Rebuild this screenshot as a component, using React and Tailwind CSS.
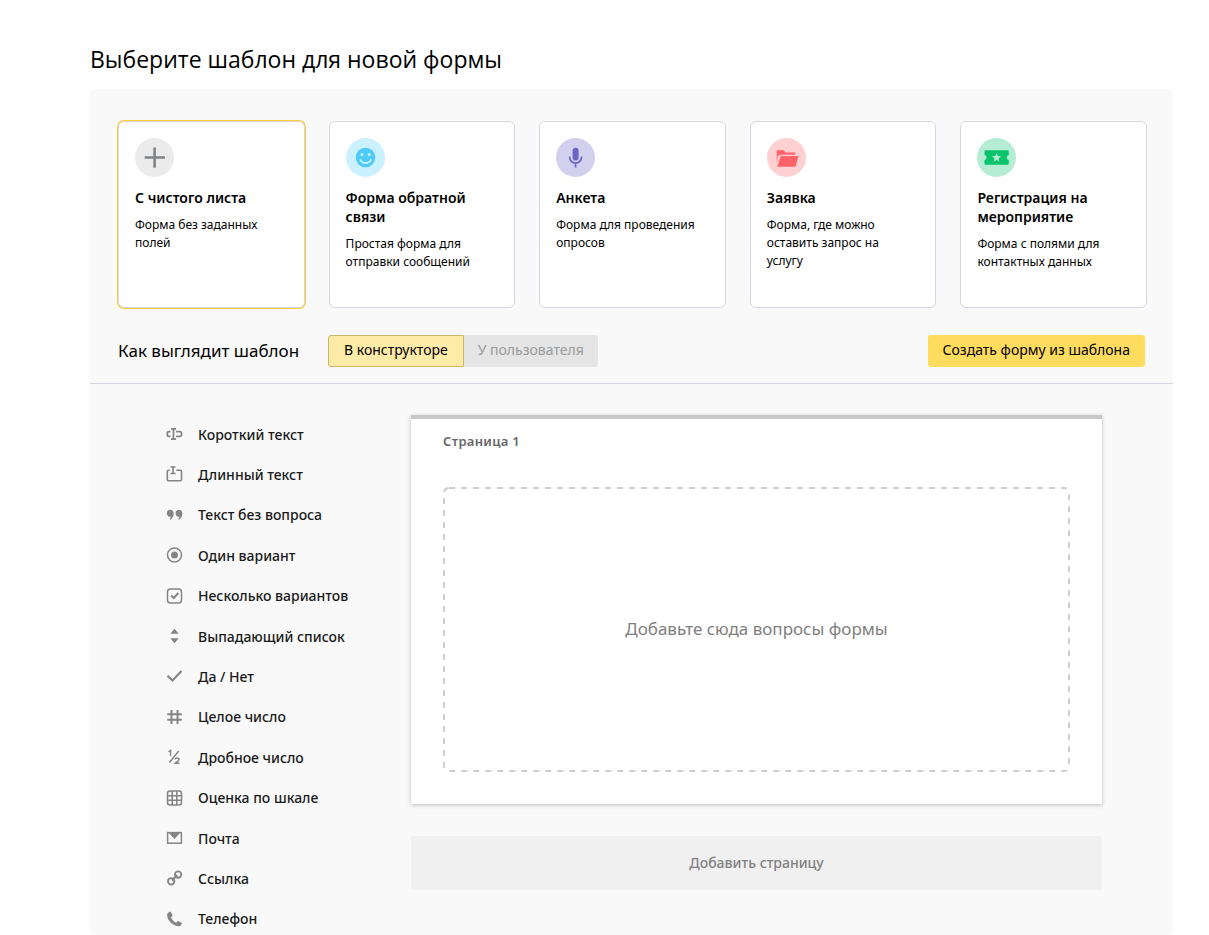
import React, { useState } from 'react';

const templates = [
  { id: 'blank', title: 'С чистого листа', text: 'Форма без заданных полей', circle: 'bg-[#ebebeb]', icon: PlusIcon },
  { id: 'feedback', title: 'Форма обратной связи', text: 'Простая форма для отправки сообщений', circle: 'bg-[#caf1fd]', icon: SmileIcon },
  { id: 'survey', title: 'Анкета', text: 'Форма для проведения опросов', circle: 'bg-[#d2d0ee]', icon: MicIcon },
  { id: 'request', title: 'Заявка', text: 'Форма, где можно оставить запрос на услугу', circle: 'bg-[#ffd0d2]', icon: FolderIcon },
  { id: 'event', title: 'Регистрация на мероприятие', text: 'Форма с полями для контактных данных', circle: 'bg-[#b4edd3]', icon: TicketIcon },
];

function PlusIcon() {
  return (
    <svg width="39" height="39" viewBox="0 0 39 39" fill="#7f8486">
      <path d="M18.3 9.5h2.6v8.7h9v2.6h-9v9h-2.6v-9h-8.6v-2.6h8.6z" />
    </svg>
  );
}

function SmileIcon() {
  return (
    <svg width="39" height="39" viewBox="0 0 39 39" fill="none">
      <circle cx="19.5" cy="19.5" r="9.8" fill="#4ecbf7" />
      <circle cx="16" cy="16.4" r="1.5" fill="#caf1fd" />
      <circle cx="23.2" cy="16.4" r="1.5" fill="#caf1fd" />
      <path d="M14.2 21.2c.7 2.2 2.8 3.8 5.4 3.8s4.7-1.6 5.4-3.8" stroke="#caf1fd" strokeWidth="1.8" />
    </svg>
  );
}

function MicIcon() {
  return (
    <svg width="39" height="39" viewBox="0 0 39 39" fill="none">
      <rect x="16.6" y="9.7" width="6" height="12.8" rx="3" fill="#6a65c3" />
      <path d="M13.7 18.5v.8a5.900 5.900 0 0 0 11.8 0v-.8M19.6 25v4.5" stroke="#6a65c3" strokeWidth="1.7" />
    </svg>
  );
}

function FolderIcon() {
  return (
    <svg width="39" height="39" viewBox="0 0 39 39" fill="#ff6369">
      <path d="M9.700 12.300h7l2 2.200h9.600v2.300H13.300l-2.500 1.200-1.100 8z" />
      <path d="M13.600 18h17.800l-2.800 10.800H10.300z" />
    </svg>
  );
}

function TicketIcon() {
  return (
    <svg width="39" height="39" viewBox="0 0 39 39">
      <path d="M8.500 12.300h22a1.300 1.300 0 0 1 1.300 1.300v3.400a2.600 2.600 0 0 0 0 5.100v3.400a1.300 1.300 0 0 1-1.300 1.300h-22a1 1 0 0 1-1-1v-3.700a2.600 2.600 0 0 0 0-5.100v-3.700a1 1 0 0 1 1-1z" fill="#08c36c" />
      <path d="M19.600 14.800l1.300 3.200 3.300.2-2.600 2.200.9 3.400-2.900-1.900-2.900 1.900.9-3.400-2.600-2.200 3.300-.2z" fill="#b4edd3" />
    </svg>
  );
}

const questionTypes = [
  {
    label: 'Короткий текст',
    icon: (
      <g fill="none" stroke="currentColor" strokeWidth="1.8">
        <path d="M5 2.800h5M5 13.200h5M7.500 2.800v10.400" />
        <path d="M4.500 5.700H2.900a1.600 1.600 0 0 0-1.600 1.600v1.400a1.600 1.600 0 0 0 1.600 1.600h1.600M10 5.700h4a1.500 1.500 0 0 1 1.500 1.500v1.600a1.500 1.500 0 0 1-1.500 1.500h-4" />
      </g>
    ),
  },
  {
    label: 'Длинный текст',
    icon: (
      <g fill="none" stroke="currentColor" strokeWidth="1.6">
        <path d="M4.500 1h5M4.500 7.500h5M7 1v6.500" />
        <path d="M3.700 4.300H2.500a1.200 1.200 0 0 0-1.200 1.200v8a1.200 1.200 0 0 0 1.200 1.200h11.800a1.200 1.200 0 0 0 1.200-1.200v-8a1.200 1.200 0 0 0-1.200-1.200h-4" />
      </g>
    ),
  },
  {
    label: 'Текст без вопроса',
    icon: (
      <g fill="currentColor">
        <path d="M4 2.800a3.500 3.500 0 0 1 3.700 3.700c0 3-1.300 5-3.600 6.200l-.6-.6c.8-.7 1.200-1.400 1.300-2.300A3.500 3.500 0 1 1 4 2.800z" />
        <path d="M12.700 2.800a3.500 3.500 0 0 1 3.700 3.700c0 3-1.300 5-3.600 6.200l-.6-.6c.8-.7 1.200-1.400 1.300-2.300a3.500 3.500 0 1 1-.8-7z" />
      </g>
    ),
  },
  {
    label: 'Один вариант',
    icon: (
      <g>
        <circle cx="8.500" cy="8" r="7" fill="none" stroke="currentColor" strokeWidth="1.5" />
        <circle cx="8.500" cy="8" r="3.500" fill="currentColor" />
      </g>
    ),
  },
  {
    label: 'Несколько вариантов',
    icon: (
      <g fill="none" stroke="currentColor" strokeWidth="1.5">
        <rect x="1.500" y="1" width="14" height="14" rx="3" />
        <path d="M5.200 7.500l2.600 2.500 4.500-5" strokeWidth="2" />
      </g>
    ),
  },
  {
    label: 'Выпадающий список',
    icon: <path d="M8.500.7l4.200 5H4.300zM8.500 15.300l4.200-5H4.300z" fill="currentColor" />,
  },
  {
    label: 'Да / Нет',
    icon: <path d="M1.500 7.800l5 4.700L15.500 3" fill="none" stroke="currentColor" strokeWidth="2.2" />,
  },
  {
    label: 'Целое число',
    icon: <path d="M5.500 1v14M11.500 1v14M1.300 5.200h14.500M1.300 10.800h14.500" fill="none" stroke="currentColor" strokeWidth="2" />,
  },
  {
    label: 'Дробное число',
    icon: (
      <g fill="none" stroke="currentColor" strokeWidth="1.5">
        <path d="M2.500 2.700l2-1.200V7M12.700 2L3.500 13.500" />
        <path d="M9.200 10.500c0-2.200 3.800-2.100 3.800 0 0 1.400-2.300 2.200-3.800 3.700h4.300" />
      </g>
    ),
  },
  {
    label: 'Оценка по шкале',
    icon: (
      <g fill="none" stroke="currentColor" strokeWidth="1.6">
        <rect x="1.500" y="1" width="14" height="14" rx="2.500" />
        <path d="M6.200 1v14M10.800 1v14M1.500 5.700h14M1.500 10.300h14" />
      </g>
    ),
  },
  {
    label: 'Почта',
    icon: (
      <g>
        <rect x="1.600" y="2.600" width="13.800" height="10.600" fill="none" stroke="currentColor" strokeWidth="1.5" />
        <path d="M2.500 2.500h12L8.500 9z" fill="currentColor" />
      </g>
    ),
  },
  {
    label: 'Ссылка',
    icon: (
      <g fill="none" stroke="currentColor" strokeWidth="1.900">
        <circle cx="5.200" cy="11.300" r="3.200" />
        <circle cx="12.100" cy="4.600" r="3.200" />
        <path d="M6 10.500l5.300-5.200" />
      </g>
    ),
  },
  {
    label: 'Телефон',
    icon: (
      <path
        d="M3.700.8L1.800 2C.5 4 1.100 7.500 4.400 11.200c3.400 3.600 7.200 4.600 9.900 3.800l1.500-2.300c.2-.4.1-.8-.3-1l-3.200-1.600c-.4-.2-.8-.1-1 .2l-1 1.400C8.200 10.900 5.800 8.500 4.900 6.200l1.400-1c.4-.3.5-.7.3-1.100L4.800 1.100c-.2-.4-.7-.5-1.100-.3z"
        fill="currentColor"
      />
    ),
  },
];

function TemplateCard({ template, selected, onSelect }) {
  const Icon = template.icon;
  return (
    <button
      type="button"
      aria-pressed={selected}
      onClick={onSelect}
      className={
        'flex min-h-[187px] flex-col items-start rounded-md border border-[#d5d5e3] bg-white py-4 pr-5 pl-4 text-left ' +
        (selected ? 'ring-1 ring-[#ffcc33]' : '')
      }
    >
      <span className={'rounded-full ' + template.circle}>
        <Icon />
      </span>
      <span className="mt-[11px] text-[14px] leading-[19px] font-semibold">{template.title}</span>
      <span className="mt-[9px] text-[12px] leading-[18px]">{template.text}</span>
    </button>
  );
}

function DropZone({ children }) {
  return (
    <div className="relative mt-9 flex min-h-[285px] items-center justify-center pb-0.5 text-[17px] text-[#808080]">
      {/* CSS dashes are too short here, so the outline is drawn */}
      <svg className="absolute inset-0 h-full w-full overflow-visible" fill="none" aria-hidden="true">
        <rect
          x="1"
          y="1"
          rx="5"
          className="h-[calc(100%-2px)] w-[calc(100%-2px)]"
          stroke="#cecece"
          strokeWidth="2"
          strokeDasharray="6 6"
        />
      </svg>
      {children}
    </div>
  );
}

export default function App() {
  const [selected, setSelected] = useState('blank');

  return (
    <main className="bg-white pt-11 pr-9 pl-[90px] font-['Noto_Sans',sans-serif] text-black">
      <h1 className="font-['Open_Sans','Noto_Sans',sans-serif] text-[23px] leading-[30px]">Выберите шаблон для новой формы</h1>

      <div className="mt-[15px] rounded-md bg-[#f9f9f9]">
        <div className="grid grid-cols-5 gap-6 pt-8 pr-[26px] pl-7">
          {templates.map((t) => (
            <TemplateCard key={t.id} template={t} selected={selected === t.id} onSelect={() => setSelected(t.id)} />
          ))}
        </div>

        <div className="flex items-center border-b border-[#d5d5e3] pt-[27px] pr-7 pb-4 pl-7">
          <h2 className="w-[210px] text-[17px] leading-6">Как выглядит шаблон</h2>
          <div className="flex text-[14px]">
            <button type="button" className="h-8 rounded-l-[3px] border border-[#ccb66e] bg-[#ffeba8] px-[15px] pb-1">
              В конструкторе
            </button>
            <button type="button" className="h-8 rounded-r-[3px] bg-[#e5e5e5] px-3.5 pb-1 text-[#999]">
              У пользователя
            </button>
          </div>
          <button type="button" className="ml-auto h-8 rounded-[3px] bg-[#ffdb5e] px-[15px] pb-1 text-[14px]">
            Создать форму из шаблона
          </button>
        </div>

        <div className="flex pr-[71px] pl-[76px]">
          <ul className="flex min-h-[551px] w-[245px] flex-col justify-between pt-10 pb-1.5">
            {questionTypes.map((q) => (
              <li key={q.label} className="flex h-5 items-center gap-[15px] text-[14px] font-medium text-[#1a1a1a]">
                <svg width="17" height="16" viewBox="0 0 17 16" className="text-[#858585]">
                  {q.icon}
                </svg>
                {q.label}
              </li>
            ))}
          </ul>

          <div className="flex-1 pt-[31px]">
            <section className="border-t-4 border-[#c8c8c8] bg-white px-8 pt-3 pb-8 shadow-[0_1px_4px_rgba(0,0,0,0.25)]">
              <h3 className="text-[13px] leading-5 font-semibold tracking-wide text-[#666]">Страница 1</h3>
              <DropZone>Добавьте сюда вопросы формы</DropZone>
            </section>
            <button type="button" className="mt-8 h-[54px] w-full rounded-[3px] bg-[#f0f0f0] pb-0.5 text-[14px] font-medium text-[#808080]">
              Добавить страницу
            </button>
          </div>
        </div>
      </div>
    </main>
  );
}
